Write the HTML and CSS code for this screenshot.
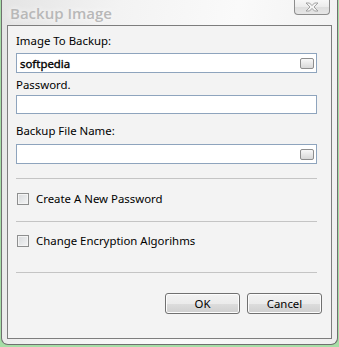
FILE: index.html
```html
<!DOCTYPE html>
<html>
<head>
<meta charset="utf-8">
<link rel="stylesheet" href="styles.css">
</head>
<body>
<div class="window">
  <div class="titlebar">
    <span class="title">Backup Image</span>
    <div class="close">
      <svg width="16" height="10" viewBox="0 0 16 10">
        <path d="M2 1 H5.5 L8 3.6 L10.5 1 H14 L10 5 L14 9 H10.5 L8 6.4 L5.5 9 H2 L6 5 Z" fill="#f4f4f4" stroke="#9a9a9a" stroke-width="0.9" stroke-linejoin="round"/>
      </svg>
    </div>
  </div>
  <div class="client">
    <div class="label l1">Image To Backup:</div>
    <div class="field f1"><span class="value">softpedia</span><span class="dd"></span></div>
    <div class="label l2">Password.</div>
    <div class="field f2"></div>
    <div class="label l3">Backup File Name:</div>
    <div class="field f3"><span class="value"></span><span class="dd"></span></div>
    <div class="sep s1"></div>
    <div class="check c1"><span class="box"></span><span>Create A New Password</span></div>
    <div class="sep s2"></div>
    <div class="check c2"><span class="box"></span><span>Change Encryption Algorihms</span></div>
    <div class="sep s3"></div>
    <div class="buttons">
      <div class="btn">OK</div>
      <div class="btn">Cancel</div>
    </div>
  </div>
</div>
</body>
</html>
```

FILE: styles.css
```css
html, body {
  margin: 0;
  padding: 0;
}
body {
  width: 339px;
  height: 347px;
  background: #a6dea6;
  overflow: hidden;
  font-family: "Noto Sans", "Open Sans", sans-serif;
  font-size: 11.4px;
  color: #000;
}
.window {
  margin: 0 1px;
  height: 345px;
  box-sizing: border-box;
  border: 1px solid #6f6f6f;
  border-top: none;
  border-radius: 0 0 7px 7px;
  background: linear-gradient(100deg, #e4e4e4 0%, #f3f3f3 30%, #fafafa 60%, #eeeeee 100%);
  display: flex;
  flex-direction: column;
  padding: 0 5px 5px 5px;
}
.titlebar {
  height: 25px;
  display: flex;
  align-items: flex-start;
  justify-content: space-between;
}
.title {
  margin: 3px 0 0 3px;
  font-family: "Open Sans", sans-serif;
  font-weight: 600;
  font-size: 15px;
  line-height: 20px;
  color: #b8b8b8;
  text-shadow: 0 0 6px #ffffff;
}
.close {
  width: 36px;
  height: 15px;
  box-sizing: border-box;
  border: 1px solid #8d8d8d;
  border-top: none;
  border-radius: 0 0 4px 4px;
  background: linear-gradient(#f7f7f7 0%, #ececec 50%, #dedede 51%, #e6e6e6 100%);
  display: flex;
  align-items: center;
  justify-content: center;
  margin-right: 2px;
}
.close svg { display: block; }
.client {
  flex: 1;
  box-sizing: border-box;
  border: 1px solid #7d7d7d;
  background: #f3f3f3;
  padding: 7px 14px 0 8px;
  display: flex;
  flex-direction: column;
}
.label {
  line-height: 16px;
  height: 16px;
  white-space: nowrap;
}
.l1 { margin-top: 0; }
.l2 { margin-top: 4px; }
.l3 { margin-top: 9px; }
.field {
  box-sizing: border-box;
  height: 20px;
  border: 1px solid #8ea4bd;
  background: #ffffff;
  display: flex;
  align-items: center;
  justify-content: space-between;
  padding: 0 2px 0 3px;
}
.f1 { margin-top: 4px; }
.f2 { margin-top: 2px; height: 19px; }
.f3 { margin-top: 5px; }
.value {
  font-weight: normal;
  -webkit-text-stroke: 0.35px #000;
}
.dd {
  width: 14px;
  height: 11px;
  box-sizing: border-box;
  border: 1px solid #8e8e8e;
  border-radius: 2px;
  background: linear-gradient(#f8f8f8, #e8e8e8 50%, #d8d8d8);
}
.sep {
  height: 1px;
  background: #c4c4c4;
}
.s1 { margin-top: 14px; }
.s2 { margin-top: 16px; }
.s3 { margin-top: 25px; }
.check {
  display: flex;
  align-items: center;
  height: 12px;
  line-height: 14px;
  gap: 6px;
  white-space: nowrap;
}
.c1 { margin-top: 14px; }
.c2 { margin-top: 13px; }
.box {
  flex: none;
  width: 12px;
  height: 12px;
  margin-left: 1px;
  margin-right: 1px;
  box-sizing: border-box;
  border: 1px solid #8e8f8f;
  background: linear-gradient(135deg, #d8dadc, #f4f5f6);
  box-shadow: inset 0 0 0 1px #f4f4f4;
}
.buttons {
  display: flex;
  justify-content: flex-end;
  gap: 7px;
  margin-top: 20px;
  margin-right: -5px;
}
.btn {
  width: 75px;
  height: 21px;
  box-sizing: border-box;
  border: 1px solid #707070;
  border-radius: 3px;
  background: linear-gradient(#f2f2f2 0%, #ebebeb 50%, #dddddd 51%, #cfcfcf 100%);
  box-shadow: inset 0 0 0 1px #fcfcfc;
  display: flex;
  align-items: center;
  justify-content: center;
  line-height: 14px;
}
```
